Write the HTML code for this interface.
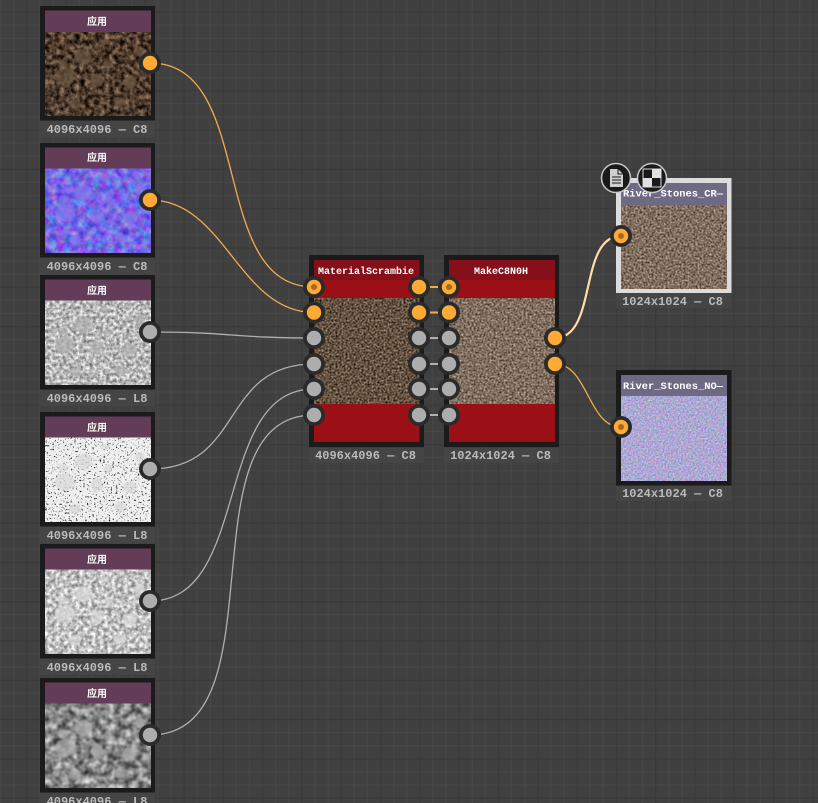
<!DOCTYPE html>
<html><head><meta charset="utf-8"><style>
html,body{margin:0;padding:0;background:#3f3f3f;width:818px;height:803px;overflow:hidden}
svg{display:block}
.l{font:bold 12px "Liberation Mono","DejaVu Sans Mono",monospace;fill:#bbbbbb;text-anchor:middle}
.h{font:bold 10px "Liberation Sans","Noto Sans CJK SC",sans-serif;fill:#fff;text-anchor:middle}
.t{font:bold 10px "Liberation Mono",monospace;fill:#fff;text-anchor:middle}
</style></head><body>
<svg width="818" height="803" viewBox="0 0 818 803" xmlns="http://www.w3.org/2000/svg">
<defs>
<pattern id="g" patternUnits="userSpaceOnUse" x="26.3" y="11.6" width="39.3" height="39.3">
<rect width="39.3" height="39.3" fill="#404040"/>
<path d="M13.6 0V39.3M26.7 0V39.3M0 13.6H39.3M0 26.7H39.3" stroke="#484848" stroke-width="1"/>
<path d="M.5 0V39.3M0 .5H39.3" stroke="#3a3a3a" stroke-width="1.4"/>
</pattern>
<filter id="fd" x="0" y="0" width="1" height="1" color-interpolation-filters="sRGB"><feTurbulence type="fractalNoise" baseFrequency=".2" numOctaves="4" seed="3"/><feColorMatrix values=".9 0 0 0 -.14  .75 0 0 0 -.14  .6 0 0 0 -.12  0 0 0 0 1"/></filter>
<filter id="fn" x="0" y="0" width="1" height="1" color-interpolation-filters="sRGB"><feTurbulence type="fractalNoise" baseFrequency=".14" numOctaves="3" seed="8"/><feColorMatrix values=".7 0 0 0 .11  0 .7 0 0 .06  0 0 .35 0 .72  0 0 0 0 1"/></filter>
<filter id="fr" x="0" y="0" width="1" height="1" color-interpolation-filters="sRGB"><feTurbulence type="fractalNoise" baseFrequency=".3" numOctaves="3" seed="5"/><feColorMatrix values=".9 0 0 0 .27  .9 0 0 0 .27  .9 0 0 0 .27  0 0 0 0 1"/></filter>
<filter id="fb" x="0" y="0" width="1" height="1" color-interpolation-filters="sRGB"><feTurbulence type="fractalNoise" baseFrequency=".55" numOctaves="2" seed="11"/><feColorMatrix values="5 0 0 0 -1  5 0 0 0 -1  5 0 0 0 -1  0 0 0 0 1"/></filter>
<filter id="fh" x="0" y="0" width="1" height="1" color-interpolation-filters="sRGB"><feTurbulence type="fractalNoise" baseFrequency=".25" numOctaves="3" seed="14"/><feColorMatrix values=".9 0 0 0 .3  .9 0 0 0 .3  .9 0 0 0 .3  0 0 0 0 1"/></filter>
<filter id="fs" x="0" y="0" width="1" height="1" color-interpolation-filters="sRGB"><feTurbulence type="fractalNoise" baseFrequency=".13" numOctaves="2" seed="20"/><feColorMatrix values="1 0 0 0 .03  1 0 0 0 .03  1 0 0 0 .03  0 0 0 0 1"/></filter>
<filter id="fa" x="0" y="0" width="1" height="1" color-interpolation-filters="sRGB"><feTurbulence type="fractalNoise" baseFrequency=".5" numOctaves="3" seed="2"/><feColorMatrix values=".9 0 0 0 -.06  .8 0 0 0 -.08  .7 0 0 0 -.095  0 0 0 0 1"/></filter>
<filter id="fc" x="0" y="0" width="1" height="1" color-interpolation-filters="sRGB"><feTurbulence type="fractalNoise" baseFrequency=".5" numOctaves="3" seed="6"/><feColorMatrix values=".8 0 0 0 .1  .8 0 0 0 .03  .8 0 0 0 -.03  0 0 0 0 1"/></filter>
<filter id="fo" x="0" y="0" width="1" height="1" color-interpolation-filters="sRGB"><feTurbulence type="fractalNoise" baseFrequency=".6" numOctaves="2" seed="9"/><feColorMatrix values=".6 0 0 0 .38  0 .6 0 0 .36  0 0 .4 0 .63  0 0 0 0 1"/></filter>
<filter id="bl"><feGaussianBlur stdDeviation=".8"/></filter>
<g id="st" filter="url(#bl)" opacity=".7">
<ellipse cx="38" cy="25" rx="9" ry="8"/><ellipse cx="20" cy="45" rx="10" ry="9"/><ellipse cx="52" cy="48" rx="6" ry="7"/><ellipse cx="63" cy="32" rx="4" ry="4"/><ellipse cx="85" cy="50" rx="7" ry="6"/><ellipse cx="18" cy="31" rx="5" ry="4"/><ellipse cx="30" cy="72" rx="6" ry="5"/><ellipse cx="75" cy="70" rx="6" ry="5"/><ellipse cx="95" cy="20" rx="5" ry="5"/><ellipse cx="60" cy="10" rx="5" ry="3"/>
</g>
<g id="po"><circle r="11" fill="#2b2b2b"/><circle r="7.2" fill="#ffaa36"/></g>
<g id="pd"><circle r="11" fill="#2b2b2b"/><circle r="7.2" fill="#ffaa36"/><circle r="3" fill="#a86a1e"/></g>
<g id="pg"><circle r="11" fill="#2b2b2b"/><circle r="7.2" fill="#adadad"/></g>
</defs>

<rect width="818" height="803" fill="url(#g)"/>

<!-- label strips -->
<g fill="#454545">
<rect x="40" y="121" width="115" height="16"/><rect x="40" y="258" width="115" height="16"/><rect x="40" y="390" width="115" height="16"/><rect x="40" y="527" width="115" height="16"/><rect x="40" y="659" width="115" height="16"/><rect x="40" y="793" width="115" height="10"/>
<rect x="309" y="448" width="115" height="15"/><rect x="444" y="448" width="115" height="15"/><rect x="616" y="293" width="115" height="15"/><rect x="616" y="486" width="115" height="15"/>
</g>

<!-- Left nodes -->
<rect x="40" y="6" width="115" height="114.500" fill="#1b1b1b"/>
<rect x="45" y="32" width="106" height="84" filter="url(#fd)"/>
<use href="#st" x="45" y="32" fill="#6a5442"/>
<rect x="45" y="10.500" width="106" height="21.500" fill="#633d58"/>

<rect x="40" y="143" width="115" height="114.500" fill="#1b1b1b"/>
<rect x="45" y="168" width="106" height="85" filter="url(#fn)"/>
<use href="#st" x="45" y="168" fill="#8276ec"/>
<rect x="45" y="147.500" width="106" height="21" fill="#633d58"/>

<rect x="40" y="275" width="115" height="114.500" fill="#1b1b1b"/>
<rect x="45" y="300" width="106" height="85" filter="url(#fr)"/>
<use href="#st" x="45" y="300" fill="#b0b0b0"/>
<rect x="45" y="279.500" width="106" height="21" fill="#633d58"/>

<rect x="40" y="412" width="115" height="114.500" fill="#1b1b1b"/>
<rect x="45" y="437" width="106" height="85" filter="url(#fb)"/>
<use href="#st" x="45" y="437" fill="#e6e6e6"/>
<rect x="45" y="437" width="106" height="85" fill="#000" opacity=".06"/>
<rect x="45" y="416.500" width="106" height="21" fill="#633d58"/>

<rect x="40" y="544" width="115" height="114.500" fill="#1b1b1b"/>
<rect x="45" y="569" width="106" height="85" filter="url(#fh)"/>
<use href="#st" x="45" y="569" fill="#dcdcdc"/>
<rect x="45" y="548.500" width="106" height="21" fill="#633d58"/>

<rect x="40" y="678" width="115" height="114.500" fill="#1b1b1b"/>
<rect x="45" y="703" width="106" height="85" filter="url(#fs)"/>
<use href="#st" x="45" y="703" fill="#a8a8a8"/>
<rect x="45" y="682.500" width="106" height="21" fill="#633d58"/>

<text class="h" x="97" y="25">应用</text>
<text class="h" x="97" y="161">应用</text>
<text class="h" x="97" y="294">应用</text>
<text class="h" x="97" y="431">应用</text>
<text class="h" x="97" y="563">应用</text>
<text class="h" x="97" y="697">应用</text>

<text class="l" x="97" y="133">4096x4096 — C8</text>
<text class="l" x="97" y="270">4096x4096 — C8</text>
<text class="l" x="97" y="402">4096x4096 — L8</text>
<text class="l" x="97" y="539">4096x4096 — L8</text>
<text class="l" x="97" y="671">4096x4096 — L8</text>
<text class="l" x="97" y="805">4096x4096 — L8</text>

<!-- Center nodes -->
<rect x="309" y="255" width="115" height="192" fill="#1b1b1b"/>
<rect x="314" y="260" width="105.500" height="20" fill="#85101a"/>
<rect x="314" y="280" width="105.500" height="18" fill="#9b1017"/>
<rect x="314" y="298" width="105.500" height="106" filter="url(#fa)"/>
<rect x="314" y="404" width="105.500" height="38" fill="#9b1017"/>
<text class="t" x="366" y="274">MaterialScrambie</text>

<rect x="444" y="255" width="115" height="192" fill="#1b1b1b"/>
<rect x="449" y="260" width="106" height="20" fill="#85101a"/>
<rect x="449" y="280" width="106" height="18" fill="#9b1017"/>
<rect x="449" y="298" width="106" height="106" filter="url(#fc)"/>
<rect x="449" y="404" width="106" height="38" fill="#9b1017"/>
<text class="t" x="501" y="274">MakeC8N0H</text>

<text class="l" x="365.500" y="459">4096x4096 — C8</text>
<text class="l" x="500.500" y="459">1024x1024 — C8</text>

<!-- Output nodes -->
<rect x="616" y="178" width="115.500" height="115" fill="#dcdcdc"/>
<rect x="621" y="205" width="106" height="84" filter="url(#fc)"/>
<rect x="621" y="183" width="106" height="22" fill="#6e6a84"/>
<text class="t" x="673" y="196.500" textLength="100" lengthAdjust="spacingAndGlyphs">River_Stones_CR—</text>
<text class="l" x="672.500" y="305">1024x1024 — C8</text>

<rect x="616" y="370" width="115.500" height="115.500" fill="#1b1b1b"/>
<rect x="621" y="396" width="106" height="85" filter="url(#fo)"/>
<rect x="621" y="375" width="106" height="21" fill="#6e6a84"/>
<text class="t" x="673" y="389" textLength="100" lengthAdjust="spacingAndGlyphs">River_Stones_NO—</text>
<text class="l" x="672.500" y="497">1024x1024 — C8</text>

<!-- Wires -->
<g fill="none" stroke-width="1.300">
<g stroke="#f2ac4a">
<path d="M150 63C257 63 207 287 314 287"/>
<path d="M150 200C225 200 239 312.500 314 312.500"/>
<path d="M555 364C588 364 588 427 621 427"/>
</g>
<g stroke="#b0b0b0">
<path d="M150 332C232 332 232 338 314 338"/>
<path d="M150 469C245 469 219 364 314 364"/>
<path d="M150 601C252 601 212 389 314 389"/>
<path d="M150 735C284 735 180 415 314 415"/>
</g>
<path d="M555 338C598 338 578 236 621 236" stroke="#ffdca8" stroke-width="2.200"/>
</g>
<g stroke-width="2">
<path d="M419 287H449M419 312.500H449" stroke="#f2ac4a"/>
<path d="M419 338H449M419 364H449M419 389H449M419 415H449" stroke="#b0b0b0"/>
</g>

<!-- Ports -->
<use href="#po" x="150" y="63"/><use href="#po" x="150" y="200"/>
<use href="#pg" x="150" y="332"/><use href="#pg" x="150" y="469"/><use href="#pg" x="150" y="601"/><use href="#pg" x="150" y="735"/>
<use href="#pd" x="314" y="287"/><use href="#po" x="314" y="312.500"/><use href="#pg" x="314" y="338"/><use href="#pg" x="314" y="364"/><use href="#pg" x="314" y="389"/><use href="#pg" x="314" y="415"/>
<use href="#po" x="419" y="287"/><use href="#po" x="419" y="312.500"/><use href="#pg" x="419" y="338"/><use href="#pg" x="419" y="364"/><use href="#pg" x="419" y="389"/><use href="#pg" x="419" y="415"/>
<use href="#pd" x="449" y="287"/><use href="#po" x="449" y="312.500"/><use href="#pg" x="449" y="338"/><use href="#pg" x="449" y="364"/><use href="#pg" x="449" y="389"/><use href="#pg" x="449" y="415"/>
<use href="#po" x="555" y="338"/><use href="#po" x="555" y="364"/>
<use href="#pd" x="621" y="236"/><use href="#pd" x="621" y="427"/>

<!-- Icons -->
<circle cx="616" cy="178" r="14.500" fill="#1a1a1a" stroke="#c8c8c8" stroke-width="1.500"/>
<path d="M610 169H618L623 174V187H610Z" fill="#cfcfcf"/>
<path d="M618 169V174H623" fill="none" stroke="#1a1a1a" stroke-width="1"/>
<path d="M612 177H621M612 180H621M612 183H621" stroke="#1a1a1a" stroke-width="1"/>
<circle cx="652" cy="178" r="14.500" fill="#1a1a1a" stroke="#c8c8c8" stroke-width="1.500"/>
<rect x="643" y="169" width="18" height="18" fill="#1a1a1a" stroke="#d8d8d8" stroke-width="1"/>
<rect x="652" y="169" width="9" height="9" fill="#e0e0e0"/>
<rect x="643" y="178" width="9" height="9" fill="#e0e0e0"/>
</svg>
</body></html>
